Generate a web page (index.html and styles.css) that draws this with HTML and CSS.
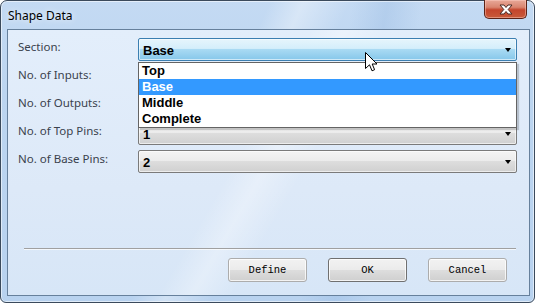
FILE: index.html
```html
<!DOCTYPE html>
<html>
<head>
<meta charset="utf-8">
<link rel="stylesheet" href="styles.css">
</head>
<body>
<div class="window">
  <div class="titlebar">
    <span class="title">Shape Data</span>
    <div class="close">
      <svg width="16" height="11" viewBox="0 0 16 11"><path d="M2 1 L6 1 L8 3.5 L10 1 L14 1 L10.2 5.5 L14 10 L10 10 L8 7.5 L6 10 L2 10 L5.8 5.5 Z" fill="#fff" stroke="#4a2a25" stroke-width="1" stroke-linejoin="round"/></svg>
    </div>
  </div>
  <div class="client">
    <div class="form">
      <div class="row">
        <span class="label">Section:</span>
        <div class="combo combo-hot"><span class="value">Base</span><span class="arrow"></span></div>
        <ul class="dropdown">
          <li>Top</li>
          <li class="sel">Base</li>
          <li>Middle</li>
          <li>Complete</li>
        </ul>
      </div>
      <div class="row">
        <span class="label">No. of Inputs:</span>
        <div class="combo"><span class="value"></span><span class="arrow"></span></div>
      </div>
      <div class="row">
        <span class="label">No. of Outputs:</span>
        <div class="combo"><span class="value"></span><span class="arrow"></span></div>
      </div>
      <div class="row">
        <span class="label">No. of Top Pins:</span>
        <div class="combo"><span class="value">1</span><span class="arrow"></span></div>
      </div>
      <div class="row">
        <span class="label">No. of Base Pins:</span>
        <div class="combo"><span class="value">2</span><span class="arrow"></span></div>
      </div>
    </div>
    <div class="footer">
      <div class="sep"></div>
      <div class="buttons">
        <button class="btn">Define</button>
        <button class="btn btn-default">OK</button>
        <button class="btn">Cancel</button>
      </div>
    </div>
    <svg class="cursor" width="13" height="21" viewBox="0 0 13 21"><path d="M0.5 0.5 L0.5 16.5 L4.5 12.8 L7 18.8 L9.6 17.7 L7.2 12 L12 12 Z" fill="#fff" stroke="#000" stroke-width="1" stroke-linejoin="miter"/></svg>
  </div>
</div>
</body>
</html>
```
FILE: styles.css
```css
* { box-sizing: border-box; }
html, body { margin: 0; padding: 0; }
body {
  width: 535px;
  height: 303px;
  overflow: hidden;
  background: #fff;
}
.window {
  width: 535px;
  height: 303px;
  border: 1px solid #3b4a5c;
  border-radius: 7px 7px 6px 6px;
  padding: 0 4px 6px 6px;
  display: flex;
  flex-direction: column;
  background:
    linear-gradient(115deg, rgba(255,255,255,0) 40%, rgba(255,255,255,0.35) 45%, rgba(255,255,255,0) 52%),
    linear-gradient(100deg, rgba(255,255,255,0) 60%, rgba(150,185,225,0.35) 66%, rgba(255,255,255,0) 72%),
    linear-gradient(180deg, #c4daf3 0%, #bcd5f0 30%, #b8d2ef 100%);
  box-shadow: inset 0 0 0 1px rgba(255,255,255,0.55);
}
.titlebar {
  height: 28px;
  display: flex;
  align-items: flex-start;
  justify-content: space-between;
  flex: none;
}
.title {
  font-family: "Noto Sans", "Open Sans", sans-serif;
  font-size: 12px;
  color: #000;
  margin-top: 6px;
  margin-left: 1px;
  text-shadow: 0 0 6px rgba(255,255,255,0.9);
}
.close {
  width: 43px;
  height: 19px;
  margin-top: -1px;
  margin-right: 3px;
  border: 1px solid #5b2217;
  border-top: none;
  border-radius: 0 0 5px 5px;
  background: linear-gradient(180deg, #e8a898 0%, #d98570 40%, #c4452c 55%, #c85a3a 100%);
  box-shadow: inset 0 0 0 1px rgba(255,210,200,0.45);
  display: flex;
  align-items: center;
  justify-content: center;
}
.close svg { display: block; margin-top: 1px; }
.client {
  position: relative;
  flex: 1;
  border: 1px solid #66809c;
  background:
    linear-gradient(120deg, rgba(255,255,255,0) 45%, rgba(255,255,255,0.3) 50%, rgba(255,255,255,0) 56%),
    linear-gradient(180deg, #e3eefb 0%, #dde9f8 60%, #d7e6f7 100%);
  display: flex;
  flex-direction: column;
  padding: 8px 12px 13px 10px;
  font-family: "Noto Sans", "Open Sans", sans-serif;
}
.form {
  display: flex;
  flex-direction: column;
  gap: 5px;
}
.row {
  position: relative;
  display: flex;
  align-items: center;
  height: 23px;
}
.label {
  width: 120px;
  font-size: 11.5px;
  color: #3a424d;
  margin-top: -6px;
}
.combo {
  flex: 1;
  height: 23px;
  border: 1px solid #7a7a7a;
  border-radius: 2px;
  background: linear-gradient(180deg, #f4f4f4 0%, #ececec 45%, #dddddd 50%, #d0d0d0 100%);
  box-shadow: inset 0 0 0 1px rgba(255,255,255,0.6);
  display: flex;
  align-items: center;
  justify-content: space-between;
  padding: 0 4px 0 4px;
}
.combo-hot {
  border-color: #3c7fb1;
  background: linear-gradient(180deg, #e6f5fc 0%, #d4eefb 45%, #a9daf3 50%, #86c7ea 100%);
}
.value {
  font-family: "Liberation Sans", Arial, sans-serif;
  font-weight: bold;
  font-size: 13px;
  color: #000;
  margin-top: 1px;
}
.arrow {
  width: 0;
  height: 0;
  border-left: 3.5px solid transparent;
  border-right: 3.5px solid transparent;
  border-top: 4px solid #000;
  margin-right: 1px;
}
.dropdown {
  position: absolute;
  left: 120px;
  top: 24px;
  width: 379px;
  margin: 0;
  padding: 0;
  list-style: none;
  background: #fff;
  border: 1px solid #646464;
  box-shadow: 2px 2px 1px rgba(0,0,0,0.18);
  z-index: 5;
}
.dropdown li {
  height: 16px;
  line-height: 16px;
  padding-left: 3px;
  font-family: "Liberation Sans", Arial, sans-serif;
  font-weight: bold;
  font-size: 13px;
  color: #000;
}
.dropdown li.sel {
  background: #3399ff;
  color: #fff;
}
.footer {
  margin-top: auto;
}
.sep {
  height: 1px;
  background: #a0a0a0;
  margin: 0 1px 0 6px;
  box-shadow: 0 1px 0 rgba(255,255,255,0.7);
}
.buttons {
  display: flex;
  justify-content: flex-end;
  gap: 21px;
  margin-top: 9px;
  padding-right: 10px;
}
.btn {
  width: 79px;
  height: 24px;
  border: 1px solid #acacac;
  border-radius: 3px;
  background: linear-gradient(180deg, #f2f2f2 0%, #ebebeb 48%, #dddddd 52%, #cfcfcf 100%);
  box-shadow: inset 0 0 0 1px rgba(255,255,255,0.75);
  font-family: "Liberation Mono", "Courier New", monospace;
  font-size: 10.5px;
  color: #000;
  padding: 0;
}
.btn-default {
  border-color: #707070;
}
.cursor {
  position: absolute;
  left: 357px;
  top: 22px;
  z-index: 10;
}
```
